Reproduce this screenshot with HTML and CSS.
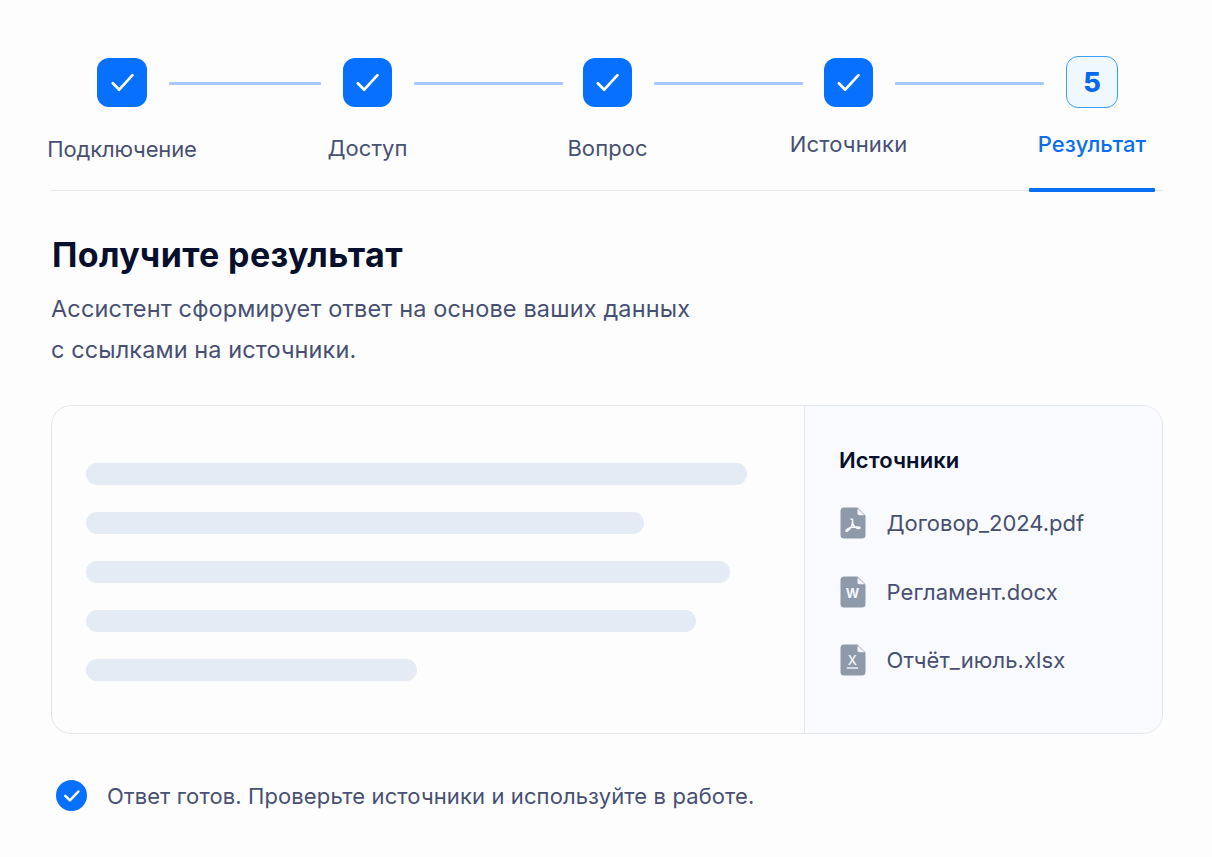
FILE: index.html
```html
<!DOCTYPE html>
<html lang="ru">
<head>
<meta charset="utf-8">
<title>Получите результат</title>
<link rel="stylesheet" href="styles.css">
</head>
<body>
<main class="page">
  <nav class="steps">
    <div class="step step-first">
      <span class="step-box"><svg class="check" viewBox="0 0 49 49"><path d="M14.800 25.300 21.200 31.700 34.500 17.200"/></svg></span>
      <span class="step-label label-connect">Подключение</span>
    </div>
    <span class="line line-first"></span>
    <div class="step">
      <span class="step-box"><svg class="check" viewBox="0 0 49 49"><path d="M14.800 25.300 21.200 31.700 34.500 17.200"/></svg></span>
      <span class="step-label label-access">Доступ</span>
    </div>
    <span class="line line-second"></span>
    <div class="step">
      <span class="step-box"><svg class="check" viewBox="0 0 49 49"><path d="M14.800 25.300 21.200 31.700 34.500 17.200"/></svg></span>
      <span class="step-label label-question">Вопрос</span>
    </div>
    <span class="line"></span>
    <div class="step">
      <span class="step-box"><svg class="check" viewBox="0 0 49 49"><path d="M14.800 25.300 21.200 31.700 34.500 17.200"/></svg></span>
      <span class="step-label label-sources">Источники</span>
    </div>
    <span class="line line-last"></span>
    <div class="step step-active">
      <span class="step-box">5</span>
      <span class="step-label label-result">Результат</span>
    </div>
  </nav>

  <h1 class="title">Получите результат</h1>
  <p class="lead"><span class="lead-one">Ассистент сформирует ответ на основе ваших данных</span><br><span class="lead-two">с ссылками на источники.</span></p>

  <section class="card">
    <div class="answer">
      <span class="bar bar-1"></span>
      <span class="bar bar-2"></span>
      <span class="bar bar-3"></span>
      <span class="bar bar-4"></span>
      <span class="bar bar-5"></span>
    </div>
    <aside class="sources">
      <h2 class="sources-title">Источники</h2>
      <ul class="files">
        <li class="file">
          <svg class="file-icon" viewBox="0 0 26 32"><path class="sheet" d="M4 .5H17.500L25.500 8.500V28a3.500 3.500 0 0 1-3.500 3.500H4A3.500 3.500 0 0 1 .5 28V4A3.500 3.500 0 0 1 4 .5Z"/><path class="fold" d="M17.500 1.500V6.500Q17.500 8.300 19.300 8.300H24.700Z"/><path class="mark" d="M11.200 12.200C12.600 11.700 12.700 12.700 12.600 14.500C12.400 18.500 9.800 22.300 7.500 24C6.300 24.700 5.600 23.900 6.300 23C7.800 21.400 11.500 20.200 15 20C17.500 19.800 20.300 19.900 20.100 20.900C19.500 22.300 16.500 21.300 14.700 19.700C13.200 18.300 12.500 16.500 12.500 14.500"/></svg>
          <span class="file-name name-pdf">Договор_2024.pdf</span>
        </li>
        <li class="file">
          <svg class="file-icon" viewBox="0 0 26 32"><path class="sheet" d="M4 .5H17.500L25.500 8.500V28a3.500 3.500 0 0 1-3.500 3.500H4A3.500 3.500 0 0 1 .5 28V4A3.500 3.500 0 0 1 4 .5Z"/><path class="fold" d="M17.500 1.500V6.500Q17.500 8.300 19.300 8.300H24.700Z"/><text class="letter letter-w" x="12.500" y="22.300">W</text></svg>
          <span class="file-name name-docx">Регламент.docx</span>
        </li>
        <li class="file">
          <svg class="file-icon" viewBox="0 0 26 32"><path class="sheet" d="M4 .5H17.500L25.500 8.500V28a3.500 3.500 0 0 1-3.500 3.500H4A3.500 3.500 0 0 1 .5 28V4A3.500 3.500 0 0 1 4 .5Z"/><path class="fold" d="M17.500 1.500V6.500Q17.500 8.300 19.300 8.300H24.700Z"/><text class="letter" x="12.300" y="21.300">X</text><path class="rule" d="M6.800 24H18"/></svg>
          <span class="file-name name-xlsx">Отчёт_июль.xlsx</span>
        </li>
      </ul>
    </aside>
  </section>

  <footer class="status">
    <svg class="status-icon" viewBox="0 0 31 31"><circle cx="15.500" cy="15.500" r="15.500"/><path d="M9.300 15.800 13.900 20.400 22.400 11.500"/></svg>
    <span class="status-text">Ответ готов. Проверьте источники и используйте в работе.</span>
  </footer>
</main>
</body>
</html>
```
FILE: styles.css
```css
* { box-sizing: border-box; }

body {
  margin: 0;
  background: #fdfdfe;
  color: #475072;
  font-family: Inter, "Noto Sans", sans-serif;
}

.page { padding: 56px 49px 0 51px; height: 857px; }

.steps {
  position: relative;
  display: flex;
  align-items: flex-start;
  height: 135px;
  padding-left: 46px;
  border-bottom: 1px solid #e4e7ec;
}

.steps::after {
  content: "";
  position: absolute;
  right: 8px;
  bottom: -2px;
  width: 126px;
  height: 4px;
  border-radius: 1px;
  background: #0a6ef5;
}

.step {
  display: flex;
  flex-direction: column;
  align-items: center;
  flex: none;
  width: 49px;
  padding-top: 2px;
}
.step-first { width: 50px; }
.step-active { width: 52px; padding-top: 0; }

.step-box {
  display: flex;
  align-items: center;
  justify-content: center;
  width: 100%;
  height: 49px;
  border-radius: 12px;
  background: #0870ff;
}
.step-active .step-box {
  height: 52px;
  border: 1.5px solid #3f9df5;
  background: #eff8ff;
  color: #0a68ea;
  font-size: 27px;
  font-weight: 800;
}

.check {
  width: 49px;
  height: 49px;
  fill: none;
  stroke: #fff;
  stroke-width: 2.7;
  stroke-linecap: round;
  stroke-linejoin: round;
}

.line {
  flex: none;
  width: 149px;
  height: 3px;
  margin: 26px 21.500px 0;
  border-radius: 1px;
  background: #a9c9fa;
}
.line-first { width: 152px; margin: 26px 22px 0; }
.line-second { margin-right: 20.500px; }
.line-last { margin-right: 22.500px; }

.step-label {
  font-size: 22px;
  line-height: 28px;
  white-space: nowrap;
}
.label-connect { margin-top: 28px; letter-spacing: -0.15px; }
.label-access, .label-question { margin-top: 26.500px; letter-spacing: 0.08px; }
.label-sources { margin-top: 23px; letter-spacing: 0.17px; }
.label-result { margin-top: 22px; color: #0a6ef0; font-weight: 500; letter-spacing: 0.08px; }

.title {
  margin: 43px 0 0 1px;
  color: #060f2b;
  font-size: 34px;
  font-weight: 700;
  line-height: 42px;
  letter-spacing: 0.37px;
}

.lead {
  margin: 13px 0 0;
  font-size: 23.500px;
  line-height: 40.500px;
}
.lead-one { letter-spacing: 0.15px; }
.lead-two { letter-spacing: 0.1px; }

.card {
  display: flex;
  height: 329px;
  margin-top: 35px;
  border: 1.5px solid #e3e7ed;
  border-radius: 20px;
  overflow: hidden;
}

.answer {
  display: flex;
  flex-direction: column;
  gap: 27px;
  width: 752px;
  padding: 57px 0 0 34px;
}
.bar { height: 22px; border-radius: 11px; background: #e5ebf4; }
.bar-1 { width: 661px; }
.bar-2 { width: 558px; }
.bar-3 { width: 644px; }
.bar-4 { width: 610px; }
.bar-5 { width: 331px; }

.sources {
  flex: 1;
  padding: 40px 0 0 34px;
  border-left: 1.5px solid #e3e7ed;
  background: #f8fafd;
}
.sources-title {
  margin: 0;
  color: #060f2b;
  font-size: 22px;
  font-weight: 600;
  line-height: 28px;
  letter-spacing: 0.1px;
}
.files {
  display: flex;
  flex-direction: column;
  gap: 36.500px;
  margin: 33px 0 0 0.500px;
  padding: 0;
  list-style: none;
}
.file { display: flex; align-items: center; gap: 21px; height: 32px; }
.file-icon { flex: none; width: 26px; height: 32px; }
.sheet { fill: #8e99a9; }
.fold { fill: #f2f5f9; }
.mark { fill: none; stroke: #f4f7fb; stroke-width: 1.500; stroke-linecap: round; stroke-linejoin: round; }
.letter { fill: #f4f7fb; font-size: 13px; font-weight: 500; text-anchor: middle; }
.letter-w { font-weight: 700; }
.rule { stroke: #f4f7fb; stroke-width: 1.400; }
.file-name { font-size: 22px; line-height: 28px; white-space: nowrap; }
.name-pdf { letter-spacing: -0.03px; }
.name-docx, .name-xlsx { letter-spacing: 0.09px; }

.status {
  display: flex;
  align-items: center;
  gap: 20px;
  margin: 45.500px 0 0 5px;
}
.status-icon { width: 31px; height: 31px; fill: #0870ff; }
.status-icon path {
  fill: none;
  stroke: #fff;
  stroke-width: 2.500;
  stroke-linecap: round;
  stroke-linejoin: round;
}
.status-text { font-size: 22px; line-height: 32px; letter-spacing: 0.11px; white-space: nowrap; }
```
